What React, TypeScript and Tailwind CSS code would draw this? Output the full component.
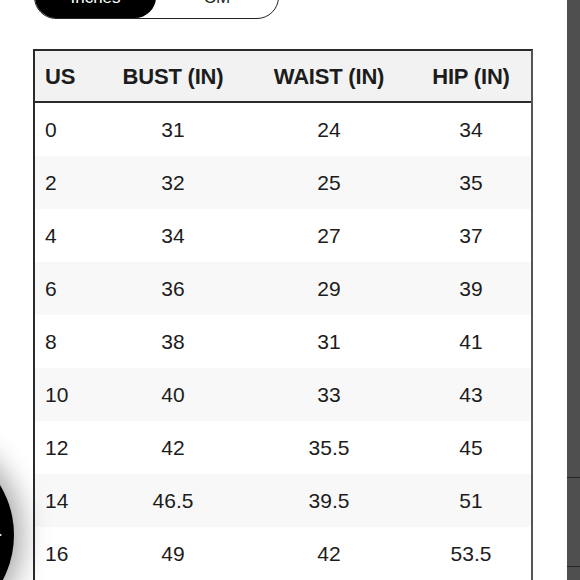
import React from "react";

const rows: [string, string, string, string][] = [
  ["0", "31", "24", "34"],
  ["2", "32", "25", "35"],
  ["4", "34", "27", "37"],
  ["6", "36", "29", "39"],
  ["8", "38", "31", "41"],
  ["10", "40", "33", "43"],
  ["12", "42", "35.5", "45"],
  ["14", "46.5", "39.5", "51"],
  ["16", "49", "42", "53.5"],
  ["18", "52", "45", "56"],
];

export default function App() {
  return (
    <div
      className="relative flex h-[580px] w-[580px] overflow-hidden bg-white text-[#1c1c1c]"
      style={{ fontFamily: '"Liberation Sans", Arial, sans-serif' }}
    >
      <div className="flex w-[567px] flex-col pl-[34px]">
        {/* toggle */}
        <div className="-mt-[25px] flex h-[44px] w-[245px] shrink-0 rounded-full border border-[#222] text-[17px]">
          <div className="flex h-full w-[121px] items-center justify-center rounded-full bg-black pt-[2px] text-white">
            Inches
          </div>
          <div className="flex h-full flex-1 items-center justify-center pt-[2px] text-[#222]">
            CM
          </div>
        </div>

        {/* table */}
        <div className="ml-[-1px] mt-[30px] w-[500px] shrink-0 border-2 border-b-0 border-[#2a2a2a] border-r-[#555]">
          <div className="grid h-[52px] grid-cols-[75px_126px_186px_109px] items-center border-b-2 border-[#2a2a2a] bg-[#f2f2f2] text-[22px] font-bold tracking-[-0.2px]">
            <div className="pl-[10px]">US</div>
            <div className="text-center">BUST (IN)</div>
            <div className="text-center">WAIST (IN)</div>
            <div className="pr-[11px] text-center">HIP (IN)</div>
          </div>
          {rows.map((r, i) => (
            <div
              key={r[0]}
              className={`grid h-[53px] grid-cols-[75px_126px_186px_109px] items-center pt-[1px] text-[21px] ${
                i % 2 === 1 ? "bg-[#f8f8f8]" : "bg-white"
              }`}
            >
              <div className="pl-[10px]">{r[0]}</div>
              <div className="text-center">{r[1]}</div>
              <div className="text-center">{r[2]}</div>
              <div className="pr-[11px] text-center">{r[3]}</div>
            </div>
          ))}
        </div>
      </div>

      {/* right dark strip */}
      <div className="flex w-[13px] flex-col bg-[#4f4f4f]">
        <div className="h-[477px] shrink-0" />
        <div className="h-px shrink-0 bg-[#262626]" />
        <div className="h-[88px] shrink-0" />
        <div className="h-px shrink-0 bg-[#262626]" />
      </div>

      {/* floating circle */}
      <div className="absolute left-[-178px] top-[439px] flex h-[192px] w-[192px] items-center justify-end rounded-full bg-black shadow-[0_0_28px_8px_rgba(0,0,0,0.35)]">
        <svg width="8" height="10" viewBox="0 0 8 10" className="mr-[10px]">
          <path d="M0 1 L6 5 L0 9 Z" fill="white" />
        </svg>
      </div>
    </div>
  );
}
